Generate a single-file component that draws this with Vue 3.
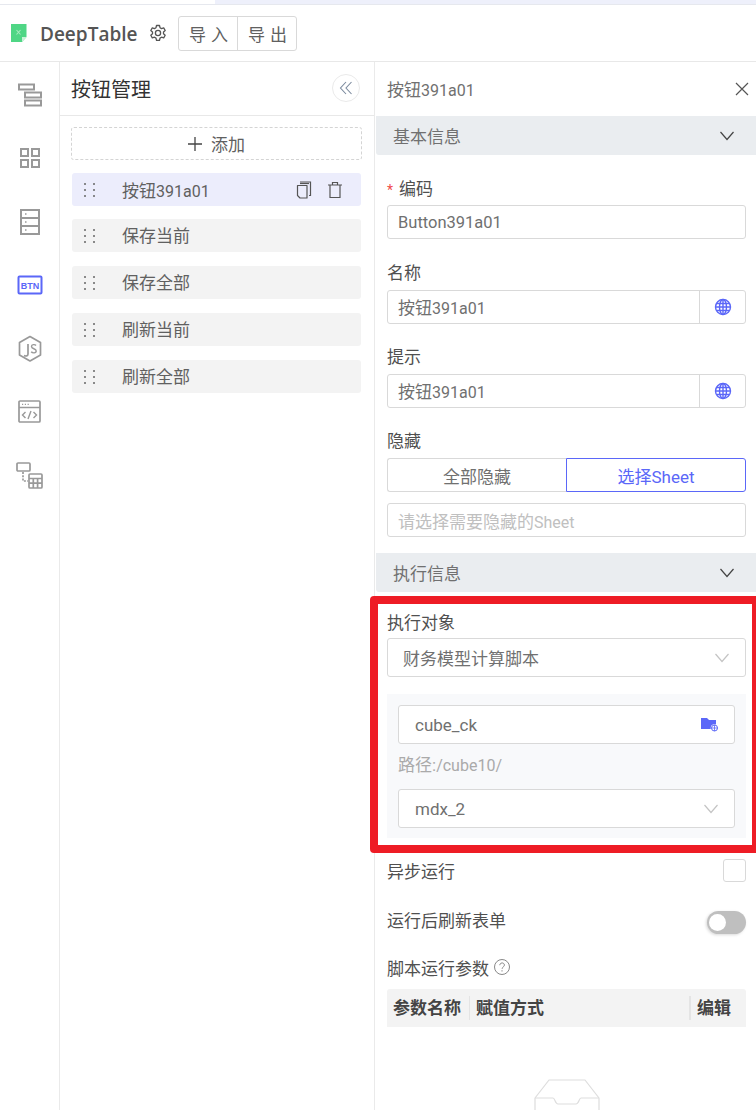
<script setup>
const items = [
  { name: '按钮', suffix: '391a01', active: true },
  { name: '保存当前', suffix: '' },
  { name: '保存全部', suffix: '' },
  { name: '刷新当前', suffix: '' },
  { name: '刷新全部', suffix: '' },
]
</script>

<template>
  <div class="page">
    <div class="topstrip"><div class="strip-fill"></div></div>
    <header class="header">
      <svg class="logo" width="18" height="20" viewBox="0 0 18 20">
        <path d="M1 1h15.500v13l-4.500 5H1z" fill="#4fd685" />
        <path d="M12 19v-5h4.500z" fill="#c9f2d8" />
        <path d="M6.500 7l4 4.500M10.500 7l-4 4.500" stroke="#a6e9bf" stroke-width="1.100" fill="none" />
      </svg>
      <span class="brand">DeepTable</span>
      <svg class="gear" width="18" height="18" viewBox="0 0 18 18" fill="none" stroke="#555" stroke-width="1.300">
        <path d="M7.500 1.500h3l.5 2.200 1.500.9 2.200-.7 1.500 2.600-1.700 1.500v1.800l1.700 1.500-1.500 2.600-2.200-.7-1.500.9-.5 2.200h-3l-.5-2.200-1.500-.9-2.200.7-1.500-2.600 1.700-1.500V8L1.800 6.500l1.500-2.600 2.200.7L7 3.700z" stroke-linejoin="round" />
        <circle cx="9" cy="9" r="2.600" />
      </svg>
      <div class="btn-group">
        <span class="hbtn">导 入</span>
        <span class="hbtn">导 出</span>
      </div>
    </header>

    <div class="body">
      <nav class="rail">
        <span class="slot">
          <svg width="26" height="24" viewBox="0 0 26 24" fill="none" stroke="#999" stroke-width="2">
            <rect x="2" y="1.500" width="15" height="5" /><rect x="8" y="9.500" width="16" height="5" /><rect x="8" y="17.500" width="16" height="5" />
          </svg>
        </span>
        <span class="slot">
          <svg width="22" height="22" viewBox="0 0 22 22" fill="none" stroke="#999" stroke-width="2">
            <rect x="2" y="2" width="7" height="7" /><rect x="13" y="2" width="7" height="7" /><rect x="2" y="13" width="7" height="7" /><rect x="13" y="13" width="7" height="7" />
          </svg>
        </span>
        <span class="slot">
          <svg width="22" height="28" viewBox="0 0 22 28" fill="none" stroke="#999" stroke-width="2">
            <rect x="2" y="2" width="18" height="24" /><path d="M2 10h18M2 18h18" /><path d="M6 6h1.500M6 14h1.500M6 22h1.500" stroke-width="1.500" />
          </svg>
        </span>
        <span class="slot">
          <svg width="26" height="20" viewBox="0 0 26 20">
            <rect x="1.500" y="1.500" width="23" height="17" rx="1" fill="none" stroke="#5b67f8" stroke-width="2" />
            <text x="13" y="13.500" text-anchor="middle" font-family="Liberation Sans" font-weight="700" font-size="9" fill="#5b67f8">BTN</text>
          </svg>
        </span>
        <span class="slot">
          <svg width="24" height="28" viewBox="0 0 24 28" fill="none" stroke="#999" stroke-width="1.700">
            <path d="M12 1.500l10.500 6v12.500L12 26 1.500 20V7.500z" stroke-linejoin="round" />
            <path d="M10 9v10c0 2-2 2.500-4 1.500" />
            <path d="M18 10.500c-1-1.300-4.500-1.300-4.500 1 0 2.800 4.700 1.700 4.700 4.500 0 2.400-3.800 2.300-5 .8" stroke-width="1.400" />
          </svg>
        </span>
        <span class="slot">
          <svg width="24" height="24" viewBox="0 0 24 24" fill="none" stroke="#999" stroke-width="1.700">
            <rect x="1" y="1" width="21" height="21" rx="1" /><path d="M1 7.500h21" stroke-width="1.500" />
            <path d="M4 4.300h1.200M6.800 4.300h1.200M9.600 4.300h1.200" stroke-width="1.200" />
            <path d="M7.500 12l-3 3 3 3M15.500 12l3 3-3 3M13 11l-3 8" stroke-width="1.400" />
          </svg>
        </span>
        <span class="slot">
          <svg width="28" height="28" viewBox="0 0 28 28" fill="none" stroke="#999" stroke-width="1.700">
            <rect x="1" y="1" width="13" height="8" rx="1" />
            <path d="M7 10v9h5" stroke-dasharray="2 1.300" />
            <rect x="13" y="12" width="13" height="14" rx="1" /><path d="M13 16.500h13M13 21.200h13M17.300 16.500V26M21.600 16.500V26" />
          </svg>
        </span>
      </nav>

      <section class="list">
        <div class="list-head">
          <span class="list-title">按钮管理</span>
          <span class="collapse">
            <svg width="14" height="14" viewBox="0 0 14 14" fill="none" stroke="#7b8a9e" stroke-width="1.100">
              <path d="M7 1L1.500 7 7 13M12.500 1L7 7l5.500 6" />
            </svg>
          </span>
        </div>
        <div class="list-body">
          <div class="add">
            <svg width="14" height="14" viewBox="0 0 14 14" fill="none" stroke="#444" stroke-width="1.300"><path d="M7 0v14M0 7h14" /></svg>
            <span>添加</span>
          </div>
          <div v-for="it in items" :key="it.name" class="row" :class="{ active: it.active }">
            <span class="dots"><i></i><i></i><i></i><i></i><i></i><i></i></span>
            <span class="row-name">{{ it.name }}<span class="lat">{{ it.suffix }}</span></span>
            <span v-if="it.active" class="row-actions">
              <svg width="16" height="18" viewBox="0 0 16 18" fill="none" stroke="#555" stroke-width="1.200">
                <path d="M1.500 4.500h9.500v12.500H4L1.500 14.500z" stroke-linejoin="round" />
                <path d="M4 1h10.500v13.500H13" />
                <path d="M4 2.500h9" />
              </svg>
              <svg width="16" height="18" viewBox="0 0 16 18" fill="none" stroke="#555" stroke-width="1.200">
                <path d="M1 4h14M5.500 4V1.500h5V4M3 4v12.500h10V4" />
              </svg>
            </span>
          </div>
        </div>
      </section>

      <aside class="props">
        <div class="props-title">
          <span class="title-text">按钮<span class="lat">391a01</span></span>
          <svg width="14" height="14" viewBox="0 0 14 14" fill="none" stroke="#555" stroke-width="1.200"><path d="M1 1l12 12M13 1L1 13" /></svg>
        </div>
        <div class="section-head">
          <span>基本信息</span>
          <svg width="16" height="10" viewBox="0 0 16 10" fill="none" stroke="#444" stroke-width="1.200"><path d="M1.500 1L8 8.500 14.500 1" /></svg>
        </div>
        <div class="fields">
          <label class="lbl lbl-first"><span class="req">*</span>编码</label>
          <div class="input"><span class="lat-wide">Button391a01</span></div>

          <label class="lbl">名称</label>
          <div class="input with-addon"><span class="grow">按钮<span class="lat">391a01</span></span>
            <span class="addon">
              <svg width="18" height="18" viewBox="0 0 18 18" fill="none" stroke="#5b67f8" stroke-width="1.400">
                <circle cx="9" cy="9" r="7.500" /><ellipse cx="9" cy="9" rx="3.500" ry="7.500" /><path d="M9 1.500v15M1.500 9h15M2.500 5.500h13M2.500 12.500h13" />
              </svg>
            </span>
          </div>

          <label class="lbl">提示</label>
          <div class="input with-addon"><span class="grow">按钮<span class="lat">391a01</span></span>
            <span class="addon">
              <svg width="18" height="18" viewBox="0 0 18 18" fill="none" stroke="#5b67f8" stroke-width="1.400">
                <circle cx="9" cy="9" r="7.500" /><ellipse cx="9" cy="9" rx="3.500" ry="7.500" /><path d="M9 1.500v15M1.500 9h15M2.500 5.500h13M2.500 12.500h13" />
              </svg>
            </span>
          </div>

          <label class="lbl">隐藏</label>
          <div class="seg">
            <span class="seg-item">全部隐藏</span>
            <span class="seg-item on">选择Sheet</span>
          </div>
          <div class="input placeholder mt11"><span>请选择需要隐藏的<span class="lat">Sheet</span></span></div>
        </div>

        <div class="section-head sec2">
          <span>执行信息</span>
          <svg width="16" height="10" viewBox="0 0 16 10" fill="none" stroke="#444" stroke-width="1.200"><path d="M1.500 1L8 8.500 14.500 1" /></svg>
        </div>
        <div class="fields">
          <label class="lbl lbl-exec">执行对象</label>
          <div class="select">
            <span>财务模型计算脚本</span>
            <svg width="16" height="10" viewBox="0 0 16 10" fill="none" stroke="#c4c4c4" stroke-width="1.200"><path d="M1.500 1L8 8.500 14.500 1" /></svg>
          </div>
          <div class="graybox">
            <div class="select inner">
              <span>cube_ck</span>
              <svg width="19" height="15" viewBox="0 0 19 15">
                <path d="M1 1h6l2 2h7v9H1z" fill="#5b67f8" />
                <circle cx="14.500" cy="11" r="3.800" fill="#fff" />
                <circle cx="14.500" cy="11" r="3" fill="none" stroke="#5b67f8" stroke-width="1" />
                <path d="M11.500 11h6M14.500 8v6" stroke="#5b67f8" stroke-width=".8" />
              </svg>
            </div>
            <div class="path">路径:<span class="lat">/cube10/</span></div>
            <div class="select inner">
              <span>mdx_2</span>
              <svg width="16" height="10" viewBox="0 0 16 10" fill="none" stroke="#c4c4c4" stroke-width="1.200"><path d="M1.500 1L8 8.500 14.500 1" /></svg>
            </div>
          </div>

          <div class="opt opt-a">
            <span>异步运行</span>
            <span class="check"></span>
          </div>
          <div class="opt opt-b">
            <span class="opt-text">运行后刷新表单</span>
            <span class="toggle"><i></i></span>
          </div>
          <div class="script-lbl">
            <span>脚本运行参数</span>
            <svg width="18" height="18" viewBox="0 0 18 18" fill="none" stroke="#888" stroke-width="1">
              <circle cx="9" cy="9" r="7.500" />
              <path d="M6.800 7.200c0-3 4.600-3 4.600-.1 0 1.800-2.300 1.800-2.300 3.700" />
              <path d="M9 12.200v1.300" />
            </svg>
          </div>
          <div class="thead">
            <span class="th th1">参数名称</span>
            <span class="th th2">赋值方式</span>
            <span class="th th3">编辑</span>
          </div>
          <div class="empty">
            <svg width="66" height="40" viewBox="0 0 66 40" fill="none" stroke="#ddd" stroke-width="1.200">
              <path d="M1 19L15 1h36l14 18v21H1z" stroke-linejoin="round" />
              <path d="M1 19h18c2 0 2 6 5 6h18c3 0 3-6 5-6h18" />
            </svg>
          </div>
        </div>
      </aside>
    </div>

    <div class="annot"></div>
  </div>
</template>

<style>
html, body { margin: 0; background: #fff; }
</style>

<style scoped>
.page {
  position: relative;
  width: 756px;
  height: 1110px;
  overflow: hidden;
  background: #fff;
  font-family: Roboto, "Noto Sans CJK SC", sans-serif;
  font-size: 17px;
  color: #555;
}
.lat { font-size: 16px; }
.lat-wide { font-size: 16.500px; }
.topstrip { height: 4px; border-bottom: 1px solid #e6e8ee; }
.strip-fill { height: 4px; margin-left: 215px; background: #eef0fb; }
.header {
  height: 57px;
  box-sizing: border-box;
  border-bottom: 1px solid #e8e8e8;
  display: flex;
  align-items: center;
  padding: 0 0 0 10px;
}
.logo { margin-top: 0; }
.brand {
  margin-left: 12px;
  font-family: "Open Sans", sans-serif;
  font-size: 19px;
  font-weight: 600;
  color: #555;
  margin-top: 1px;
}
.gear { margin-left: 12px; margin-top: -1px; }
.btn-group {
  display: flex;
  margin-left: 11px;
  border: 1px solid #d9d9d9;
  border-radius: 3px;
  height: 33px;
}
.hbtn {
  width: 58px;
  display: flex;
  align-items: center;
  justify-content: center;
  font-size: 17px;
  word-spacing: 1px;
  color: #606060;
}
.hbtn + .hbtn { border-left: 1px solid #d9d9d9; }

.body { display: flex; height: 1048px; }
.rail {
  width: 60px;
  flex: none;
  box-sizing: border-box;
  border-right: 1px solid #eaeaea;
  padding-top: 1px;
  display: grid;
  grid-auto-rows: 63.500px;
  align-content: start;
}
.slot { display: flex; align-items: center; justify-content: center; }

.list {
  width: 315px;
  flex: none;
  border-right: 1px solid #eaeaea;
  box-sizing: border-box;
}
.list-head {
  height: 54px;
  box-sizing: border-box;
  border-bottom: 1px solid #e8e8e8;
  display: flex;
  align-items: center;
  justify-content: space-between;
  padding: 0 14px 0 11px;
}
.list-title { font-size: 20px; color: #333; }
.collapse {
  width: 28px;
  height: 28px;
  box-sizing: border-box;
  border: 1px solid #eaeaea;
  border-radius: 50%;
  display: flex;
  align-items: center;
  justify-content: center;
  margin-top: -1px;
}
.list-body { padding: 11px 12px 0 11px; }
.add {
  height: 33px;
  box-sizing: border-box;
  border: 1px dashed #d4d4d4;
  border-radius: 3px;
  display: flex;
  align-items: center;
  justify-content: center;
  gap: 9px;
  color: #606060;
}
.row {
  height: 33px;
  margin-top: 14px;
  margin-left: 1px;
  width: 289px;
  display: flex;
  align-items: center;
  background: #f3f3f3;
  border-radius: 3px;
}
.add + .row { margin-top: 13px; margin-bottom: -1px; }
.row.active { background: #ecedfc; }
.dots {
  width: 50px;
  flex: none;
  display: grid;
  grid-template-columns: 2px 2px;
  grid-auto-rows: 2px;
  column-gap: 7px;
  row-gap: 4px;
  padding-left: 12px;
  box-sizing: border-box;
}
.dots i { display: block; background: #666; border-radius: 50%; }
.row-name { flex: 1; color: #606060; margin-top: -2px; }
.row.active .row-name { margin-top: 0; }
.row-actions { display: flex; gap: 15px; padding-right: 18px; align-items: center; }

.props { flex: 1; min-width: 0; padding-left: 1px; }
.props-title {
  height: 54px;
  box-sizing: border-box;
  display: flex;
  align-items: center;
  justify-content: space-between;
  padding: 0 7px 0 11px;
  color: #707070;
}
.title-text { margin-top: -2px; }
.section-head {
  height: 39px;
  background: #eaedf0;
  display: flex;
  align-items: center;
  justify-content: space-between;
  padding: 0 21px 0 17px;
  color: #707070;
  border-radius: 0 0 0 3px;
}
.sec2 { margin-top: 16px; }
.fields { padding: 0 10px 0 11px; }
.lbl { display: block; height: 24px; line-height: 24px; margin-top: 21.350px; color: #505050; margin-bottom: 5px; }
.lbl-first { margin-top: 22.300px; margin-bottom: 4px; }
.lbl-exec { margin-top: 19px; margin-bottom: 3px; }
.req { color: #f04b4b; margin-right: 6px; font-size: 14px; }
.input {
  height: 34px;
  box-sizing: border-box;
  border: 1px solid #d9d9d9;
  border-radius: 3px;
  display: flex;
  align-items: center;
  padding-left: 10px;
  color: #707070;
}
.with-addon { padding-right: 0; }
.grow { flex: 1; }
.addon {
  width: 45px;
  height: 100%;
  border-left: 1px solid #d9d9d9;
  display: flex;
  align-items: center;
  justify-content: center;
}
.seg { display: flex; height: 34px; }
.seg-item {
  flex: 1;
  box-sizing: border-box;
  border: 1px solid #d9d9d9;
  display: flex;
  align-items: center;
  justify-content: center;
  color: #707070;
}
.seg-item:first-child { border-radius: 3px 0 0 3px; border-right: 0; }
.seg-item.on { border-color: #5b67f8; color: #5b67f8; border-radius: 0 3px 3px 0; }
.mt11 { margin-top: 11px; }
.placeholder { color: #c0c0c0; }
.select {
  height: 39px;
  box-sizing: border-box;
  border: 1px solid #d9d9d9;
  border-radius: 3px;
  display: flex;
  align-items: center;
  justify-content: space-between;
  padding: 0 15px 0 15px;
  color: #707070;
  background: #fff;
}
.graybox {
  margin-top: 17px;
  height: 144px;
  box-sizing: border-box;
  background: #f8f9fb;
  padding: 11px 11px 0;
}
.inner { padding-left: 16px; padding-right: 15px; }
.path { height: 45px; line-height: 43px; color: #aaa; }
.opt { display: flex; align-items: center; justify-content: space-between; color: #505050; }
.opt-a { margin-top: 21px; height: 23px; }
.opt-b { margin-top: 29px; height: 23px; }
.opt-text { margin-top: -7px; }
.check {
  width: 23px;
  height: 23px;
  box-sizing: border-box;
  border: 1px solid #d9d9d9;
  border-radius: 3px;
}
.toggle {
  width: 39px;
  height: 23px;
  border-radius: 12px;
  background: #bfbfbf;
  position: relative;
  box-shadow: -1px 1px 3px rgba(0, 0, 0, .15);
}
.toggle i {
  position: absolute;
  left: 2px;
  top: 3px;
  width: 17px;
  height: 17px;
  border-radius: 50%;
  background: #fff;
}
.script-lbl {
  margin-top: 21px;
  height: 24px;
  display: flex;
  align-items: center;
  gap: 4px;
  color: #505050;
}
.thead {
  margin-top: 10px;
  height: 38px;
  display: flex;
  align-items: center;
  background: #f3f3f3;
  border-radius: 3px 3px 0 0;
  font-weight: 700;
  color: #444;
}
.th { height: 24px; line-height: 24px; box-sizing: border-box; padding-left: 6px; }
.th1 { width: 83px; border-right: 1px solid #e4e4e4; }
.th2 { width: 221px; border-right: 2px solid #e4e4e4; }
.th3 { flex: 1; }
.empty { margin-top: 52px; display: flex; justify-content: center; }

.annot {
  position: absolute;
  left: 370px;
  top: 596px;
  width: 390px;
  height: 257px;
  box-sizing: border-box;
  border: 8px solid #ee1c25;
  border-radius: 4px;
  pointer-events: none;
}
</style>
